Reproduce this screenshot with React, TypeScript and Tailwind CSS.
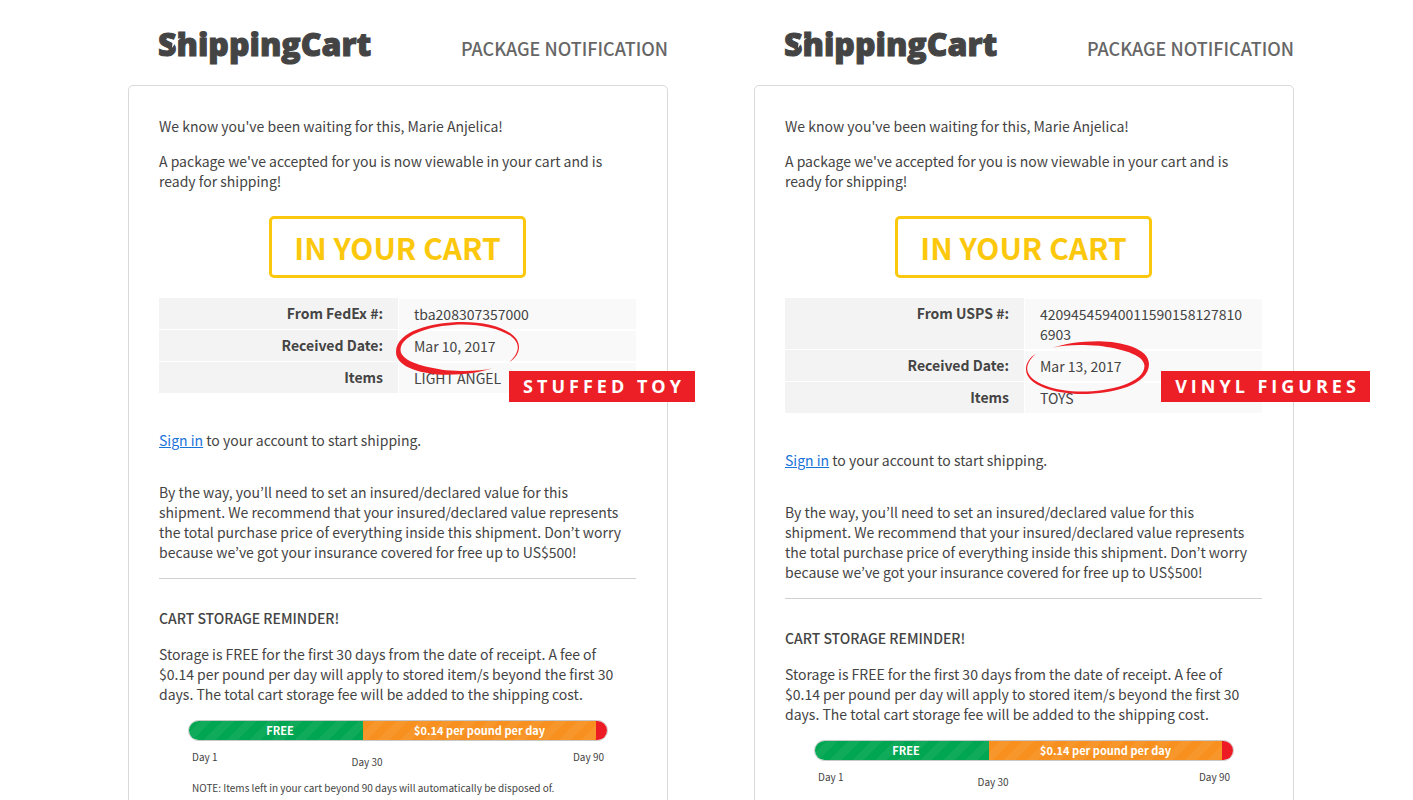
import clsx from "clsx";

type Package = {
    carrier: string;
    tracking: string;
    received: string;
    items: string;
    tag: string;
    note?: string;
    flipMark?: boolean;
};

const packages: Package[] = [
    {
        carrier: "FedEx",
        tracking: "tba208307357000",
        received: "Mar 10, 2017",
        items: "LIGHT ANGEL",
        tag: "STUFFED TOY",
        note: "NOTE: Items left in your cart beyond 90 days will automatically be disposed of.",
    },
    {
        carrier: "USPS",
        tracking: "420945459400115901581278106903",
        received: "Mar 13, 2017",
        items: "TOYS",
        tag: "VINYL FIGURES",
        flipMark: true,
    },
];

// hand drawn marker ring around the date
const MarkerRing = ({ flip }: { flip?: boolean }) => (
    <svg
        className={clsx(
            "absolute z-10 h-[54px] w-[124px] pointer-events-none",
            flip ? "-top-2.5 left-0 rotate-180" : "-top-2.5 -left-[3px]"
        )}
        viewBox="0 0 124 54"
        aria-hidden="true"
    >
        <path
            fill="#ed1f26"
            d="M96.7 47.3C85 51 70 53.8 50 53.8C28 53.5 0 47 0 31C0 10 36 1 67 1C95 1 123 10 123 26C123 32 119 38 113.3 41C118 37 121.8 32 121.8 26C121 12 93 3.4 67 3.4C40 3.4 4.8 12 4.5 29C5 41 30 46.5 50 49.2C70 50.6 85 50 96.7 47.3Z"
        />
    </svg>
);

const Logo = () => (
    <div className="relative font-['Open_Sans'] text-[32px] leading-10 font-extrabold text-[#444] [-webkit-text-stroke:1px_#444]">
        ShippingCart
        {/* bird cut into the S */}
        <svg className="absolute top-3 left-2 h-4 w-4" viewBox="0 0 16 16" aria-hidden="true">
            <path fill="#fff" d="M0 1.5L7 4L15 2L10 6L6 12L6.5 7Z" />
        </svg>
    </div>
);

const StorageBar = ({ note }: { note?: string }) => (
    <div className="mr-7 ml-[29px] mt-4">
        <div className="flex h-[21px] overflow-hidden rounded-full border border-[#c8c8c8] text-center text-[11px] leading-[18px] font-bold text-white">
            <div className="w-5/12 bg-[#00a651] bg-[repeating-linear-gradient(135deg,transparent_0_8px,rgba(255,255,255,0.06)_8px_16px)] pl-2">
                FREE
            </div>
            <div className="flex-1 bg-[#f7901e] bg-[repeating-linear-gradient(135deg,transparent_0_8px,rgba(255,255,255,0.06)_8px_16px)]">
                $0.14 per pound per day
            </div>
            <div className="w-[11px] bg-[#ed1c24]" />
        </div>
        <div className="flex justify-between px-1 pt-2 text-[10px] leading-4">
            <span>Day 1</span>
            <span className="ml-4 flex-1 pt-[5px] pl-[118px]">Day 30</span>
            <span>Day 90</span>
        </div>
        {note && <p className="px-1 pt-[10px] text-[10px] leading-4">{note}</p>}
    </div>
);

const thClass = "w-[240px] border-r border-b border-white bg-[#f3f3f3] pt-[5px] pr-[15px] pb-[6px] text-right align-top font-bold";
const tdClass = "relative border-y border-white bg-[#f9f9f9] py-[5px] pr-[14px] pl-[15px] align-top break-all";

const Notification = ({ data }: { data: Package }) => {
    return (
        <article className="min-w-0">
            <header className="flex h-[85px] items-center justify-between pt-[10px] pl-[30px]">
                <div className="pb-2">
                    <Logo />
                </div>
                <h1 className="text-[18px] leading-6 font-medium text-[#666]">PACKAGE NOTIFICATION</h1>
            </header>

            <section className="rounded-[5px] border border-[#d9d9d9] pt-[30px] pr-[31px] pb-8 pl-[30px]">
                <p>We know you've been waiting for this, Marie Anjelica!</p>
                <p className="mt-[15px]">
                    A package we've accepted for you is now viewable in your cart and is ready for shipping!
                </p>

                <div className="mx-auto mt-[25px] w-[257px] rounded-[5px] border-3 border-[#fbc80e] text-center text-[30px] leading-[56px] font-bold text-[#fbc80e]">
                    IN YOUR CART
                </div>

                <div className="relative mt-5">
                    <table className="w-full table-fixed border-separate border-spacing-0">
                        <tbody>
                            <tr>
                                <th scope="row" className={thClass}>From {data.carrier} #:</th>
                                <td className={tdClass}>{data.tracking}</td>
                            </tr>
                            <tr>
                                <th scope="row" className={thClass}>Received Date:</th>
                                <td className={tdClass}>
                                    {data.received}
                                    <MarkerRing flip={data.flipMark} />
                                </td>
                            </tr>
                            <tr>
                                <th scope="row" className={thClass}>Items</th>
                                <td className={tdClass}>{data.items}</td>
                            </tr>
                        </tbody>
                    </table>
                    <div
                        className={clsx(
                            "absolute top-[73px] z-20 h-[31px] bg-[#ed1f26] pl-1 text-center font-['Open_Sans'] text-[18px] leading-[31px] font-bold tracking-[4px] whitespace-nowrap text-white",
                            data.flipMark ? "-right-[108px] w-[209px]" : "-right-[59px] w-[186px]"
                        )}
                    >
                        {data.tag}
                    </div>
                </div>

                <p className="mt-9">
                    <a href="#signin" className="text-[#1a73d9] underline">Sign in</a> to your account to start shipping.
                </p>

                <p className="mt-8">
                    By the way, you’ll need to set an insured/declared value for this shipment. We recommend that your
                    insured/declared value represents the total purchase price of everything inside this shipment. Don’t
                    worry because we’ve got your insurance covered for free up to US$500!
                </p>

                <hr className="mt-4 border-[#d0d0d0]" />

                <h2 className="mt-[29px] font-medium">CART STORAGE REMINDER!</h2>
                <p className="mt-4 pr-3">
                    Storage is FREE for the first 30 days from the date of receipt. A fee of $0.14 per pound per day will
                    apply to stored item/s beyond the first 30 days. The total cart storage fee will be added to the
                    shipping cost.
                </p>
                <StorageBar note={data.note} />
            </section>
        </article>
    );
};

const App = () => {
    return (
        <main className="grid h-screen grid-cols-2 gap-[86px] overflow-hidden bg-white pr-[119px] pl-32 font-['Noto_Sans_CJK_KR',sans-serif] text-[14px] leading-5 text-[#444]">
            {packages.map((item) => (
                <Notification key={item.tracking} data={item} />
            ))}
        </main>
    );
};

export default App;
